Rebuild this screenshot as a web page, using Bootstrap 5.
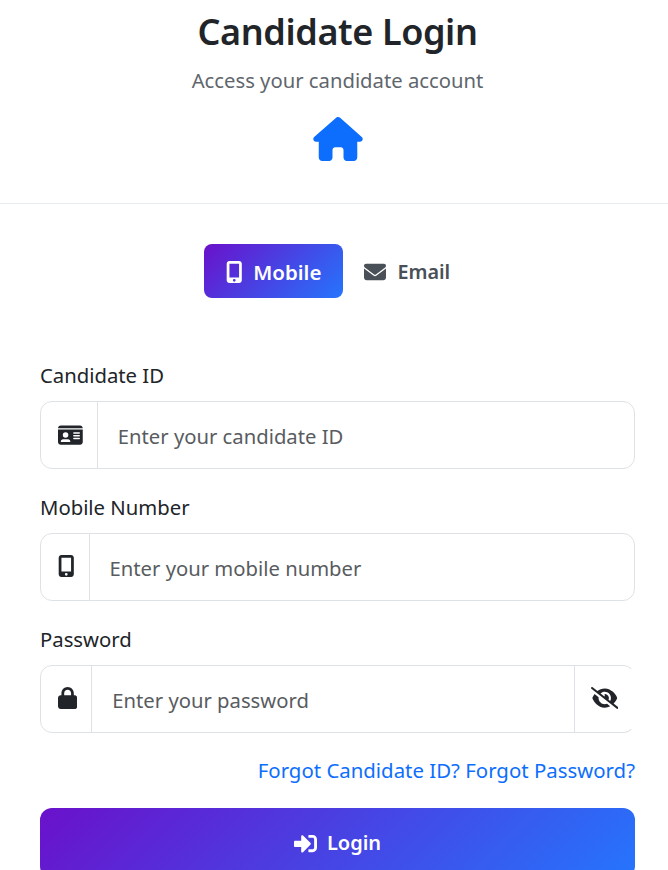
<!DOCTYPE html>
<html lang="en">
<head>
  <meta charset="UTF-8" />
  <meta name="viewport" content="width=device-width, initial-scale=1.0" />
  <title>Candidate Login</title>
  <link href="https://cdn.jsdelivr.net/npm/bootstrap@5.3.3/dist/css/bootstrap.min.css" rel="stylesheet">
  <style>
    html, body { height: 870px; overflow: hidden; }
    body { font-family: "Noto Sans", "Open Sans", sans-serif; color: #212529; background: #fff; }
    .login-head { height: 204px; padding: 6px 33px 0 40px; border-bottom: 1px solid #e9ecef; }
    .login-title { font-size: 36px; font-weight: 600; line-height: 52px; margin: 0; letter-spacing: -.4px; }
    .login-sub { font-size: 20.25px; line-height: 30px; margin: 7px 0 0; color: #5f666d; }
    .home-icon { width: 50px; height: 44px; margin-top: 22px; fill: #0d6efd; display: block; margin-left: auto; margin-right: auto; }
    .login-body { padding: 40px 33px 0 40px; }
    .tab-row { margin-bottom: 62px; }
    .tab-btn { height: 54px; padding: 2px 21px 0; border: 0; border-radius: 8px; font-size: 19.8px; line-height: 30px; font-weight: 600; background: transparent; color: #495057; }
    .tab-btn svg { height: 22px; width: auto; fill: currentColor; }
    .tab-btn span { margin-left: 3px; }
    .tab-btn.on { padding-left: 22px; padding-right: 22px; font-size: 20.5px; color: #fff; background: linear-gradient(135deg, #6a11cb 0%, #2575fc 100%); }
    .field-label { font-size: 20.3px; line-height: 30px; margin-bottom: 11px; display: block; }
    .field-wrap { margin-bottom: 23.5px; }
    .field-group { height: 67.5px; }
    .field-group .input-group-text { background: #fff; padding: 0 14px 0 17px; border-color: #dee2e6; border-radius: 12px 0 0 12px; }
    .field-group .input-group-text svg { height: 22px; width: auto; fill: #212529; display: block; }
    .field-group .input-group-text svg.icon-up { margin-bottom: 2px; }
    .field-group .form-control { font-size: 20.25px; padding: 2px 20px 0; border-color: #dee2e6; border-radius: 0 12px 12px 0; color: #212529; }
    .field-group .form-control::placeholder { color: #595c5f; opacity: 1; }
    .field-group .form-control.mid { border-radius: 0; }
    .field-group .eye-cell.input-group-text { padding: 0 16px; border-radius: 0 12px 12px 0; border-right-color: transparent; }
    .forgot-row { font-size: 20.4px; line-height: 30px; margin-top: -1.5px; margin-bottom: 23.5px; }
    .forgot-row a { color: #0d6efd; text-decoration: none; }
    .login-btn { height: 70px; width: 100%; border: 0; border-radius: 12px; color: #fff; font-size: 20px; font-weight: 600; background: linear-gradient(135deg, #6a11cb 0%, #2575fc 100%); }
    .login-btn svg { height: 23px; width: 23px; fill: #fff; margin-right: 2px; }
  </style>
</head>
<body>

  <div class="login-head text-center">
    <h1 class="login-title">Candidate Login</h1>
    <p class="login-sub">Access your candidate account</p>
    <svg class="home-icon" viewBox="0 0 576 512"><path d="M575.8 255.5c0 18-15 32.1-32 32.1h-32l.7 160.2c0 2.7-.2 5.4-.5 8.1V472c0 22.1-17.9 40-40 40H456c-1.1 0-2.2 0-3.3-.1c-1.4 .1-2.8 .1-4.2 .1H416 392c-22.1 0-40-17.9-40-40V448 384c0-17.7-14.3-32-32-32H256c-17.7 0-32 14.3-32 32v64 24c0 22.1-17.9 40-40 40H160 128.1c-1.5 0-3-.1-4.5-.2c-1.2 .1-2.4 .2-3.6 .2H104c-22.1 0-40-17.9-40-40V360c0-.9 0-1.9 .1-2.8V287.6H32c-18 0-32-14-32-32.1c0-9 3-17 10-24L266.4 8c7-7 15-8 22-8s15 2 21 7L564.8 231.5c8 7 12 15 11 24z"/></svg>
  </div>

  <div class="login-body">
    <div class="tab-row d-flex justify-content-center">
      <button type="button" class="tab-btn on d-flex align-items-center gap-2">
        <svg viewBox="0 0 384 512"><path d="M16 64C16 28.7 44.7 0 80 0H304c35.3 0 64 28.7 64 64V448c0 35.3-28.7 64-64 64H80c-35.3 0-64-28.7-64-64V64zM224 448a32 32 0 1 0 -64 0 32 32 0 1 0 64 0zM304 64H80V384H304V64z"/></svg>
        <span>Mobile</span>
      </button>
      <button type="button" class="tab-btn d-flex align-items-center gap-2">
        <svg viewBox="0 0 512 512"><path d="M48 64C21.5 64 0 85.5 0 112c0 15.1 7.1 29.3 19.2 38.4L236.8 313.6c11.4 8.5 27 8.5 38.4 0L492.8 150.4c12.1-9.1 19.2-23.3 19.2-38.4c0-26.5-21.5-48-48-48H48zM0 176V384c0 35.3 28.7 64 64 64H448c35.3 0 64-28.7 64-64V176L294.4 339.2c-22.8 17.1-54 17.1-76.8 0L0 176z"/></svg>
        <span>Email</span>
      </button>
    </div>

    <form>
      <div class="field-wrap">
        <label class="field-label" for="candId">Candidate ID</label>
        <div class="input-group field-group">
          <span class="input-group-text"><svg viewBox="0 0 576 512"><path d="M0 96l576 0c0-35.3-28.7-64-64-64H64C28.7 32 0 60.7 0 96zm0 32V416c0 35.3 28.7 64 64 64H512c35.3 0 64-28.7 64-64V128H0zM64 405.3c0-29.5 23.9-53.3 53.3-53.3H234.7c29.5 0 53.3 23.9 53.3 53.3c0 5.9-4.8 10.7-10.7 10.7H74.7c-5.9 0-10.7-4.8-10.7-10.7zM176 192a64 64 0 1 1 0 128 64 64 0 1 1 0-128zm176 16c0-8.8 7.2-16 16-16H496c8.8 0 16 7.2 16 16s-7.2 16-16 16H368c-8.8 0-16-7.2-16-16zm0 64c0-8.8 7.2-16 16-16H496c8.8 0 16 7.2 16 16s-7.2 16-16 16H368c-8.8 0-16-7.2-16-16zm0 64c0-8.8 7.2-16 16-16H496c8.8 0 16 7.2 16 16s-7.2 16-16 16H368c-8.8 0-16-7.2-16-16z"/></svg></span>
          <input type="text" class="form-control" id="candId" placeholder="Enter your candidate ID">
        </div>
      </div>
      <div class="field-wrap">
        <label class="field-label" for="mobileNo">Mobile Number</label>
        <div class="input-group field-group">
          <span class="input-group-text"><svg class="icon-up" viewBox="0 0 384 512"><path d="M16 64C16 28.7 44.7 0 80 0H304c35.3 0 64 28.7 64 64V448c0 35.3-28.7 64-64 64H80c-35.3 0-64-28.7-64-64V64zM224 448a32 32 0 1 0 -64 0 32 32 0 1 0 64 0zM304 64H80V384H304V64z"/></svg></span>
          <input type="tel" class="form-control" id="mobileNo" placeholder="Enter your mobile number">
        </div>
      </div>
      <div class="field-wrap">
        <label class="field-label" for="pwd">Password</label>
        <div class="input-group field-group">
          <span class="input-group-text"><svg class="icon-up" viewBox="0 0 448 512"><path d="M144 144v48H304V144c0-44.2-35.8-80-80-80s-80 35.8-80 80zM80 192V144C80 64.5 144.5 0 224 0s144 64.5 144 144v48h16c35.3 0 64 28.7 64 64V448c0 35.3-28.7 64-64 64H64c-35.3 0-64-28.7-64-64V256c0-35.3 28.7-64 64-64H80z"/></svg></span>
          <input type="password" class="form-control mid" id="pwd" placeholder="Enter your password">
          <span class="input-group-text eye-cell"><svg class="icon-up" viewBox="0 0 640 512"><path d="M38.8 5.1C28.4-3.1 13.3-1.2 5.1 9.2S-1.2 34.7 9.2 42.9l592 464c10.4 8.2 25.5 6.3 33.7-4.1s6.3-25.5-4.1-33.7L525.6 386.7c39.6-40.6 66.4-86.1 79.9-118.4c3.3-7.9 3.3-16.7 0-24.6c-14.9-35.7-46.2-87.7-93-131.1C465.5 68.8 400.8 32 320 32c-68.2 0-125 26.3-169.3 60.8L38.8 5.1zM223.1 149.5C248.6 126.2 282.7 112 320 112c79.5 0 144 64.5 144 144c0 24.9-6.3 48.3-17.4 68.7L408 294.5c8.4-19.3 10.6-41.4 4.8-63.3c-11.1-41.5-47.8-69.4-88.6-71.1c-5.8-.2-9.2 6.1-7.4 11.7c2.1 6.4 3.3 13.2 3.3 20.3c0 10.2-2.4 19.8-6.6 28.3l-90.3-70.8zM373 389.9c-16.4 6.5-34.3 10.1-53 10.1c-79.5 0-144-64.5-144-144c0-6.9 .5-13.6 1.4-20.2L83.1 161.5C60.3 191.2 44 220.8 34.5 243.7c-3.3 7.9-3.3 16.7 0 24.6c14.9 35.7 46.2 87.7 93 131.1C174.5 443.2 239.2 480 320 480c47.8 0 89.9-12.9 126.2-32.5L373 389.9z"/></svg></span>
        </div>
      </div>
      <div class="forgot-row text-end"><a href="#">Forgot Candidate ID?</a> <a href="#">Forgot Password?</a></div>
      <button type="button" class="login-btn d-flex align-items-center justify-content-center gap-2">
        <svg viewBox="0 0 512 512"><path d="M416 448h-84c-6.6 0-12-5.4-12-12v-40c0-6.6 5.4-12 12-12h84c17.7 0 32-14.3 32-32V160c0-17.7-14.3-32-32-32h-84c-6.6 0-12-5.4-12-12V76c0-6.6 5.4-12 12-12h84c53 0 96 43 96 96v192c0 53-43 96-96 96zm-47-201L201 79c-15-15-41-4.5-41 17v96H24c-13.3 0-24 10.7-24 24v96c0 13.3 10.7 24 24 24h136v96c0 21.5 26 32 41 17l168-168c9.3-9.4 9.3-24.6 0-34z"/></svg>
        Login
      </button>
    </form>
  </div>

  <script src="https://cdn.jsdelivr.net/npm/bootstrap@5.3.3/dist/js/bootstrap.bundle.min.js"></script>
</body>
</html>
